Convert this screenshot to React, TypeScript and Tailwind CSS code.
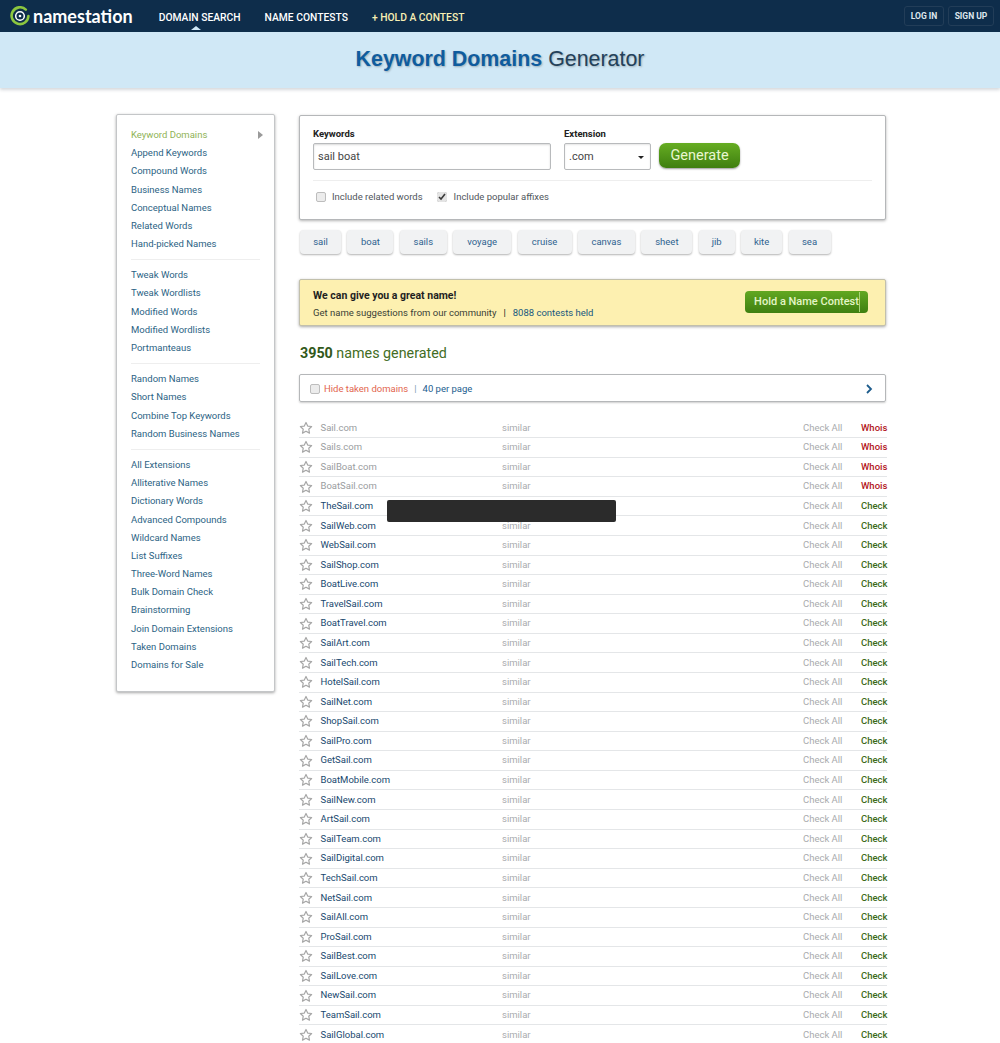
const menuGroups = [
  ["Keyword Domains", "Append Keywords", "Compound Words", "Business Names", "Conceptual Names", "Related Words", "Hand-picked Names"],
  ["Tweak Words", "Tweak Wordlists", "Modified Words", "Modified Wordlists", "Portmanteaus"],
  ["Random Names", "Short Names", "Combine Top Keywords", "Random Business Names"],
  ["All Extensions", "Alliterative Names", "Dictionary Words", "Advanced Compounds", "Wildcard Names", "List Suffixes", "Three-Word Names", "Bulk Domain Check", "Brainstorming", "Join Domain Extensions", "Taken Domains", "Domains for Sale"],
];

const chips = [
  { label: "sail", w: "w-[41px]" },
  { label: "boat", w: "w-[46px]" },
  { label: "sails", w: "w-[47px]" },
  { label: "voyage", w: "w-[58px]" },
  { label: "cruise", w: "w-[54px]" },
  { label: "canvas", w: "w-[57px]" },
  { label: "sheet", w: "w-[51px]" },
  { label: "jib", w: "w-[36px]" },
  { label: "kite", w: "w-[41px]" },
  { label: "sea", w: "w-[42px]" },
];

const takenNames = ["Sail.com", "Sails.com", "SailBoat.com", "BoatSail.com"];
const freeNames = [
  "TheSail.com", "SailWeb.com", "WebSail.com", "SailShop.com", "BoatLive.com", "TravelSail.com", "BoatTravel.com",
  "SailArt.com", "SailTech.com", "HotelSail.com", "SailNet.com", "ShopSail.com", "SailPro.com", "GetSail.com",
  "BoatMobile.com", "SailNew.com", "ArtSail.com", "SailTeam.com", "SailDigital.com", "TechSail.com", "NetSail.com",
  "SailAll.com", "ProSail.com", "SailBest.com", "SailLove.com", "NewSail.com", "TeamSail.com", "SailGlobal.com",
];

function Logo() {
  return (
    <div className="flex items-center gap-[3px]">
      <svg width="20" height="20" viewBox="0 0 20 20" fill="none">
        <path d="M15.8 3.6A8.4 8.4 0 1 0 18.4 10" stroke="#8cc63f" strokeWidth="2.6" strokeLinecap="round" />
        <circle cx="10" cy="10" r="4.3" stroke="#ffffff" strokeWidth="1.5" />
        <circle cx="10" cy="10" r="1.3" fill="#ffffff" />
      </svg>
      <span className="font-['Lato',sans-serif] text-[18px] leading-none font-bold text-white">namestation</span>
    </div>
  );
}

function Star() {
  return (
    <svg width="14" height="14" viewBox="0 0 24 24" fill="none" stroke="#a6a6a6" strokeWidth="2" strokeLinejoin="round">
      <path d="M12 2.5l2.9 6.2 6.8.8-5 4.6 1.3 6.7-6-3.3-6 3.3 1.3-6.7-5-4.6 6.8-.8z" />
    </svg>
  );
}

function DomainRow({ name, taken }: { name: string; taken: boolean }) {
  return (
    <div className="flex h-[19.58px] items-center border-b border-[#e4e6e8] text-[9.5px]">
      <div className="flex w-[21.5px] shrink-0 items-center">
        <Star />
      </div>
      <span className={`w-[181.5px] shrink-0 ${taken ? "text-[#9a9da0]" : "text-[#17486e]"}`}>{name}</span>
      <span className="w-[301px] shrink-0 text-[#a9abae]">similar</span>
      <span className="w-[58px] shrink-0 text-[#a9abae]">Check All</span>
      {taken ? (
        <span className="font-medium text-[#b3181d]">Whois</span>
      ) : (
        <span className="font-medium text-[#3c6a1a]">Check</span>
      )}
    </div>
  );
}

export default function App() {
  return (
    <div className="h-[1043px] overflow-hidden bg-white font-['Roboto',sans-serif]">
      <header className="flex h-[32px] items-center bg-[#0e2d4b] pr-[6px] pl-[10px]">
        <Logo />
        <nav className="ml-[26px] flex items-center pt-[3px] text-[10.3px] font-medium text-white">
          <span className="relative">
            DOMAIN SEARCH
            <span className="absolute top-[16.5px] left-[32px] h-0 w-0 border-x-[5px] border-b-[4px] border-x-transparent border-b-[#d0e8f6]" />
          </span>
          <span className="ml-[24px]">NAME CONTESTS</span>
          <span className="ml-[24px] text-[#f7efb4]">+ HOLD A CONTEST</span>
        </nav>
        <div className="ml-auto flex gap-[4px] text-[8.5px] font-bold text-[#dfe7ee]">
          <span className="flex h-[20px] w-[40px] items-center justify-center rounded-[3px] border border-[#223d58]">LOG IN</span>
          <span className="flex h-[20px] w-[46px] items-center justify-center rounded-[3px] border border-[#223d58]">SIGN UP</span>
        </div>
      </header>

      <div className="flex h-[56px] items-center justify-center bg-[#d0e8f6] pb-[1px] font-['Liberation_Sans',sans-serif] text-[21.4px] leading-none shadow-[0_2px_3px_rgba(120,130,140,0.3)] [text-shadow:1px_1px_2px_rgba(0,0,0,0.25)]">
        <span className="font-bold text-[#0f5c9e]">Keyword Domains</span>
        <span className="ml-[6px] text-[#23415a]">Generator</span>
      </div>

      <div className="mt-[26px] flex items-start pl-[116px]">
        <aside className="h-[578px] w-[159px] shrink-0 rounded-[2px] border border-[#c4c6c8] bg-white px-[14px] pt-[11px] shadow-[0_1px_3px_rgba(0,0,0,0.35)]">
          {menuGroups.map((group, i) => (
            <div key={group[0]} className={i > 0 ? "mt-[6px] border-t border-[#eeeeee] pt-[6px]" : ""}>
              {group.map((item) => (
                <div key={item} className="relative flex h-[18.2px] items-center text-[9.5px] text-[#2c6384]">
                  {item === "Keyword Domains" ? <span className="text-[#8fb356]">{item}</span> : item}
                  {item === "Keyword Domains" && (
                    <span className="absolute top-[5px] right-[-3px] h-0 w-0 border-y-[4px] border-l-[5px] border-y-transparent border-l-[#9a9a9a]" />
                  )}
                </div>
              ))}
            </div>
          ))}
        </aside>

        <main className="ml-[24px] w-[588px] shrink-0">
          <section className="mt-[1px] h-[105px] w-[587px] rounded-[2px] border border-[#b5b7b9] bg-white px-[13px] pt-[12px] shadow-[0_1px_3px_rgba(0,0,0,0.3)]">
            <div className="flex items-start">
              <div className="w-[238px]">
                <div className="text-[9.5px] leading-[12px] font-bold text-[#222]">Keywords</div>
                <div className="mt-[3px] flex h-[27px] items-center rounded-[2px] border border-[#b8babc] px-[4px] pt-[2px] text-[11px] text-[#444] shadow-[inset_0_1px_2px_rgba(0,0,0,0.15)]">
                  sail boat
                </div>
              </div>
              <div className="ml-[13px] w-[87px]">
                <div className="text-[9.5px] leading-[12px] font-bold text-[#222]">Extension</div>
                <div className="mt-[3px] flex h-[27px] items-center justify-between rounded-[2px] border border-[#b8babc] pt-[2px] pr-[6px] pl-[4px] text-[11px] text-[#444] shadow-[inset_0_1px_2px_rgba(0,0,0,0.1)]">
                  .com
                  <span className="h-0 w-0 border-x-[3px] border-t-[3px] border-x-transparent border-t-[#222]" />
                </div>
              </div>
              <button className="mt-[15px] ml-[8px] h-[25px] w-[81px] rounded-[7px] bg-gradient-to-b from-[#66ad22] to-[#3f7f10] pt-[1px] text-[14.5px] text-[#e9f7d0] shadow-[0_1px_2px_rgba(0,0,0,0.4)]">
                Generate
              </button>
            </div>
            <div className="mt-[10px] w-[559px] border-t border-[#eeeeee]" />
            <div className="mt-[9px] flex items-center text-[9.5px] text-[#50565c]">
              <input type="checkbox" className="ml-[3px] h-[10px] w-[10px] appearance-none rounded-[2px] border border-[#bdbdbd] bg-[#ececec]" />
              <span className="ml-[6px]">Include related words</span>
              <input type="checkbox" defaultChecked className="ml-[14px] h-[10px] w-[10px] accent-[#e4e4e4]" />
              <span className="ml-[7px]">Include popular affixes</span>
            </div>
          </section>

          <div className="mt-[10px] ml-[1px] flex gap-[6.4px]">
            {chips.map((chip) => (
              <span
                key={chip.label}
                className={`${chip.w} flex h-[24px] items-center justify-center rounded-[4px] bg-[#f1f2f3] text-[9.5px] text-[#2f6290] shadow-[0_1px_2px_rgba(0,0,0,0.3)]`}
              >
                {chip.label}
              </span>
            ))}
          </div>

          <section className="mt-[25px] flex h-[47px] w-[587px] items-center justify-between rounded-[2px] border border-[#c2c0ac] bg-[#fdf0b0] pr-[17px] pl-[13px] shadow-[0_1px_3px_rgba(0,0,0,0.35)]">
            <div className="pt-[2px]">
              <div className="text-[10.5px] leading-[14px] font-bold text-[#1f1f1f]">We can give you a great name!</div>
              <div className="mt-[4px] text-[9.5px] leading-[12px] text-[#3a3f36]">
                Get name suggestions from our community
                <span className="mx-[7px] text-[#222]">|</span>
                <span className="text-[#17587e]">8088 contests held</span>
              </div>
            </div>
            <button className="relative mb-[2px] h-[22px] w-[123px] rounded-[4px] bg-gradient-to-b from-[#62a821] to-[#3f7f10] pt-[2px] text-[11px] font-medium text-[#e4f5c6]">
              Hold a Name Contest
              <span className="absolute top-[1px] right-[8px] h-[20px] w-px bg-[#a9d47a]" />
            </button>
          </section>

          <div className="mt-[17px] ml-[1px] h-[20px] text-[14.3px] leading-[20px] text-[#436d24]">
            <span className="font-bold text-[#31591a]">3950</span> names generated
          </div>

          <section className="mt-[11px] flex h-[28px] w-[587px] items-center rounded-[2px] border border-[#b5b7b9] pt-[2px] pr-[11px] pl-[10px] text-[9.5px] shadow-[0_1px_2px_rgba(0,0,0,0.2)]">
            <input type="checkbox" className="h-[10px] w-[10px] appearance-none rounded-[2px] border border-[#bdbdbd] bg-[#ececec]" />
            <span className="ml-[4px] text-[#e2664e]">Hide taken domains</span>
            <span className="mx-[6px] text-[#7f9db5]">|</span>
            <span className="text-[#23608f]">40 per page</span>
            <svg className="ml-auto" width="10" height="10" viewBox="0 0 10 10" fill="none" stroke="#1d5c8c" strokeWidth="1.8">
              <path d="M3 1l4 4-4 4" />
            </svg>
          </section>

          <div className="relative mt-[16.5px]">
            {takenNames.map((name) => (
              <DomainRow key={name} name={name} taken />
            ))}
            {freeNames.map((name) => (
              <DomainRow key={name} name={name} taken={false} />
            ))}
            <div className="absolute top-[81.5px] left-[88px] h-[22px] w-[229px] rounded-[2px] bg-[#2b2b2b]" />
          </div>
        </main>
      </div>
    </div>
  );
}
